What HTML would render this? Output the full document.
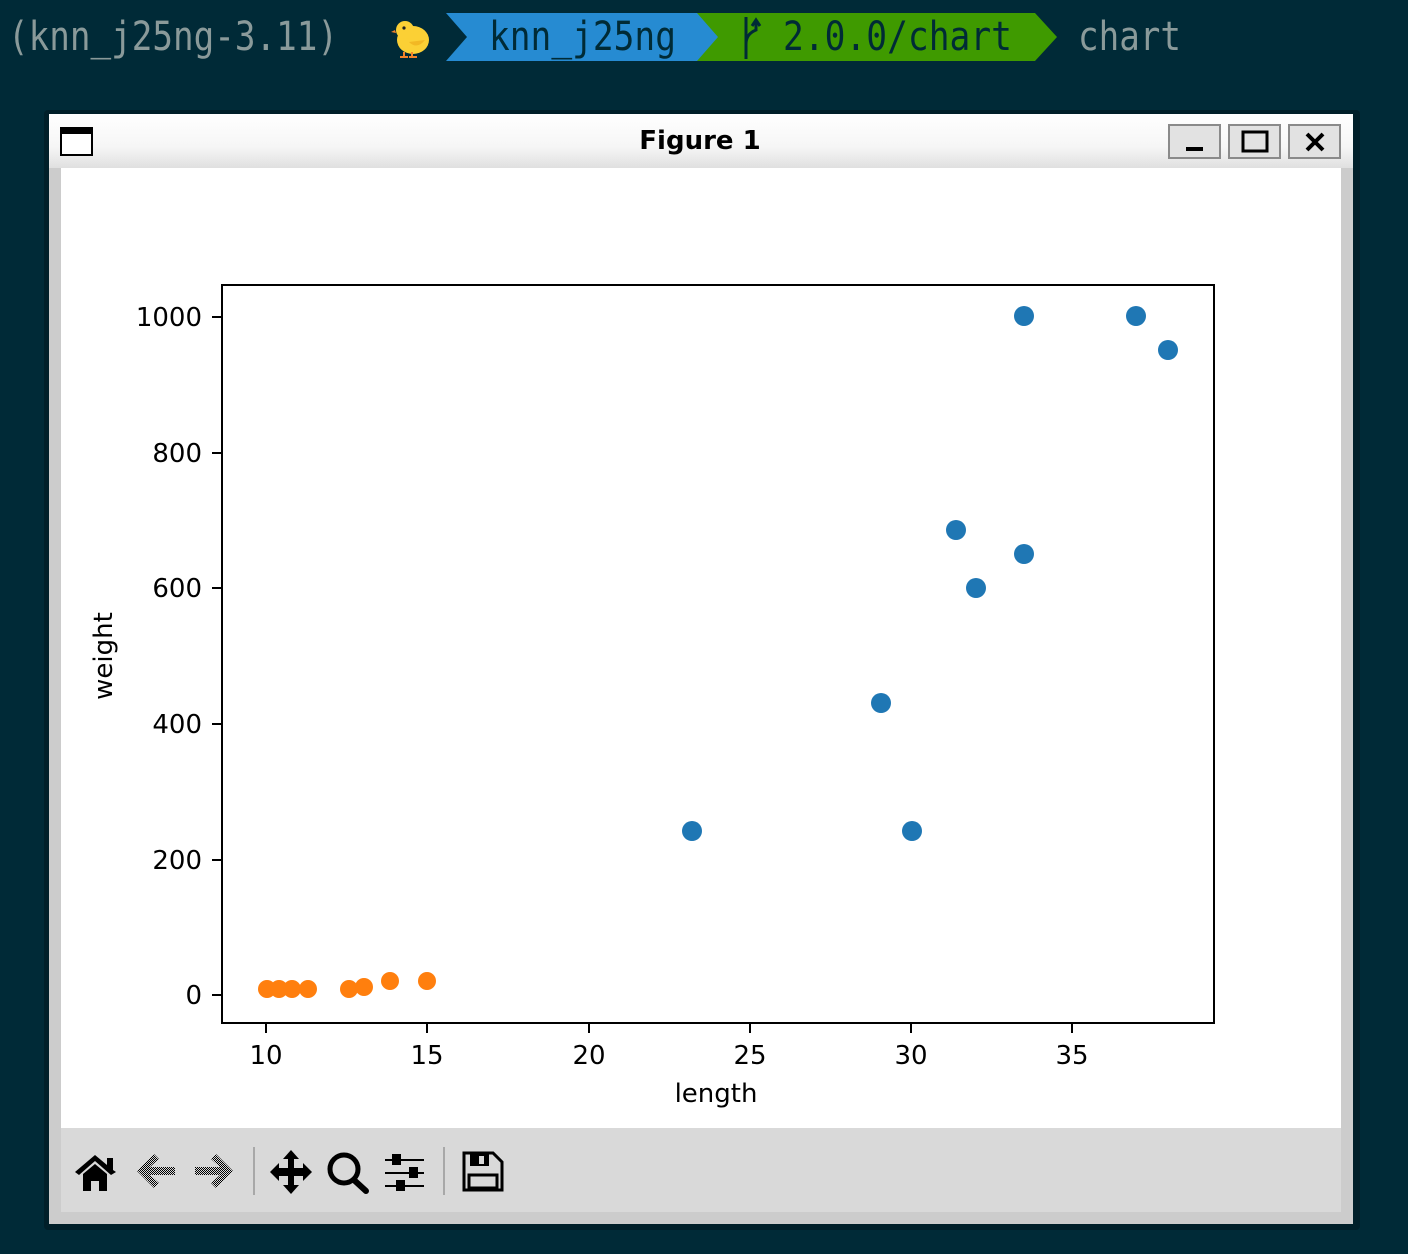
<!DOCTYPE html>
<html><head><meta charset="utf-8"><style>
html,body{margin:0;padding:0;background:#002b36;width:1408px;height:1254px;overflow:hidden}
svg{position:absolute;left:0;top:0}
</style></head><body>
<svg width="1408" height="1254" viewBox="0 0 1408 1254" xmlns="http://www.w3.org/2000/svg">
<defs>
<linearGradient id="tb" x1="0" y1="0" x2="0" y2="1"><stop offset="0" stop-color="#ffffff"/><stop offset="0.6" stop-color="#f6f6f6"/><stop offset="1" stop-color="#e0e0e0"/></linearGradient>
<pattern id="dith" width="2" height="2" patternUnits="userSpaceOnUse"><rect width="1" height="1" fill="#000"/><rect x="1" y="1" width="1" height="1" fill="#000"/></pattern>
</defs>
<rect width="1408" height="1254" fill="#002a37"/>
<!-- prompt -->
<g transform="translate(391,18)">
<ellipse cx="22" cy="22" rx="16" ry="14" fill="#fbd035"/>
<circle cx="14" cy="12" r="9" fill="#fbd035"/>
<circle cx="13" cy="10" r="1.6" fill="#222"/>
<path d="M4 12 L0 14 L5 15Z" fill="#f4822a"/>
<path d="M18 24 Q26 32 34 22" fill="#f2b824"/>
<rect x="12" y="34" width="2" height="5" fill="#f4822a"/><rect x="20" y="34" width="2" height="5" fill="#f4822a"/>
<rect x="9" y="38" width="8" height="2" fill="#f4822a"/><rect x="18" y="38" width="8" height="2" fill="#f4822a"/>
</g>
<path d="M446 13 L700 13 L720 37 L700 61 L446 61 L467 37Z" fill="#268bd2"/>
<path d="M697 13 L1035 13 L1057 37 L1035 61 L697 61 L718 37Z" fill="#3f9a00"/>
<path d="M746 17 L746 59 M746 44 Q746 34 756 30 L756 22 M752 26 L756 20 L760 26" stroke="#002b36" stroke-width="3" fill="none"/>
<g font-family="DejaVu Sans Mono, Liberation Mono, monospace" font-size="40">
<text x="8" y="50" fill="#8a9a9a" textLength="330" lengthAdjust="spacingAndGlyphs">(knn_j25ng-3.11)</text>
<text x="489" y="50" fill="#002b36" textLength="187" lengthAdjust="spacingAndGlyphs">knn_j25ng</text>
<text x="783" y="50" fill="#002b36" textLength="229" lengthAdjust="spacingAndGlyphs">2.0.0/chart</text>
<text x="1078" y="50" fill="#8a9a9a" textLength="103" lengthAdjust="spacingAndGlyphs">chart</text>
</g>
<!-- window -->
<rect x="44" y="110" width="1316" height="1120" fill="#000" opacity="0.25" rx="4"/>
<rect x="49" y="114" width="1304" height="1110" fill="#cccccc"/>
<rect x="49" y="114" width="1304" height="54" fill="url(#tb)"/>
<rect x="61" y="128" width="31" height="27" fill="#fff" stroke="#000" stroke-width="2"/>
<rect x="61" y="128" width="31" height="6" fill="#000"/>
<text x="700" y="149" text-anchor="middle" font-family="DejaVu Sans, sans-serif" font-weight="bold" font-size="26" fill="#000">Figure 1</text>
<g fill="#e2e2e2" stroke="#8a8a8a" stroke-width="2">
<rect x="1169" y="125" width="51" height="33"/><rect x="1229" y="125" width="51" height="33"/><rect x="1289" y="125" width="51" height="33"/>
</g>
<rect x="1186" y="147" width="17" height="4" fill="#000"/>
<rect x="1243" y="132" width="24" height="19" fill="none" stroke="#000" stroke-width="3"/>
<path d="M1307 134 L1323 150 M1323 134 L1307 150" stroke="#000" stroke-width="4"/>
<rect x="61" y="168" width="1280" height="960" fill="#fff"/>
<rect x="61" y="1128" width="1280" height="84" fill="#d9d9d9"/>
<!-- axes -->
<rect x="222" y="285" width="992" height="738" fill="none" stroke="#000" stroke-width="2"/>
<g stroke="#000" stroke-width="2">
<line x1="212" y1="995" x2="222" y2="995"/><line x1="212" y1="860" x2="222" y2="860"/><line x1="212" y1="724" x2="222" y2="724"/><line x1="212" y1="588" x2="222" y2="588"/><line x1="212" y1="453" x2="222" y2="453"/><line x1="212" y1="317" x2="222" y2="317"/>
<line x1="266" y1="1023" x2="266" y2="1033"/><line x1="427" y1="1023" x2="427" y2="1033"/><line x1="589" y1="1023" x2="589" y2="1033"/><line x1="750" y1="1023" x2="750" y2="1033"/><line x1="911" y1="1023" x2="911" y2="1033"/><line x1="1072" y1="1023" x2="1072" y2="1033"/>
</g>
<g font-family="DejaVu Sans, sans-serif" font-size="26" fill="#000">
<g text-anchor="end">
<text x="202" y="1004">0</text><text x="202" y="869">200</text><text x="202" y="733">400</text><text x="202" y="597">600</text><text x="202" y="462">800</text><text x="202" y="326">1000</text>
</g>
<g text-anchor="middle">
<text x="266" y="1064">10</text><text x="427" y="1064">15</text><text x="589" y="1064">20</text><text x="750" y="1064">25</text><text x="911" y="1064">30</text><text x="1072" y="1064">35</text>
<text x="716" y="1102">length</text>
<text transform="translate(112,656) rotate(-90)">weight</text>
</g>
</g>
<g fill="#1f77b4">
<circle cx="692" cy="831" r="10"/><circle cx="881" cy="703" r="10"/><circle cx="912" cy="831" r="10"/><circle cx="956" cy="530" r="10"/><circle cx="976" cy="588" r="10"/><circle cx="1024" cy="554" r="10"/><circle cx="1024" cy="316" r="10"/><circle cx="1136" cy="316" r="10"/><circle cx="1168" cy="350" r="10"/>
</g>
<g fill="#ff7f0e">
<circle cx="267" cy="989" r="9"/><circle cx="279" cy="989" r="9"/><circle cx="292" cy="989" r="9"/><circle cx="308" cy="989" r="9"/><circle cx="349" cy="989" r="9"/><circle cx="364" cy="987" r="9"/><circle cx="390" cy="981" r="9"/><circle cx="427" cy="981" r="9"/>
</g>
<!-- toolbar icons -->
<path d="M75 1172 L95 1155 L107 1165 L107 1158 L113 1158 L113 1170 L116 1172 L111 1175 L95 1161 L79 1175Z M83 1174 L95 1164 L107 1174 L107 1191 L99 1191 L99 1181 L91 1181 L91 1191 L83 1191Z" fill="#000"/>
<path d="M137 1171 L154 1154 L159 1159 L150 1167 L175 1167 L175 1175 L150 1175 L159 1183 L154 1188Z" fill="url(#dith)"/>
<path d="M233 1171 L216 1154 L211 1159 L220 1167 L195 1167 L195 1175 L220 1175 L211 1183 L216 1188Z" fill="url(#dith)"/>
<rect x="253" y="1147" width="2" height="48" fill="#a8a8a8"/>
<rect x="443" y="1147" width="2" height="48" fill="#a8a8a8"/>
<path d="M291 1150 L299 1159 L294 1159 L294 1168 L303 1168 L303 1163 L312 1172 L303 1181 L303 1176 L294 1176 L294 1185 L299 1185 L291 1194 L283 1185 L288 1185 L288 1176 L279 1176 L279 1181 L270 1172 L279 1163 L279 1168 L288 1168 L288 1159 L283 1159Z" fill="#000"/>
<circle cx="344" cy="1169" r="14" fill="none" stroke="#000" stroke-width="5"/>
<path d="M354 1180 L366 1191" stroke="#000" stroke-width="6" stroke-linecap="round"/>
<g stroke="#000" stroke-width="2"><line x1="385" y1="1160" x2="424" y2="1160"/><line x1="385" y1="1173" x2="424" y2="1173"/><line x1="385" y1="1186" x2="424" y2="1186"/></g>
<g fill="#000"><rect x="392" y="1154" width="9" height="11"/><rect x="409" y="1167" width="9" height="11"/><rect x="396" y="1180" width="9" height="11"/></g>
<path d="M464 1153 L493 1153 L502 1162 L502 1190 L464 1190Z" fill="none" stroke="#000" stroke-width="3"/>
<rect x="470" y="1154" width="19" height="12" fill="#000"/><rect x="479" y="1156" width="5" height="8" fill="#d9d9d9"/>
<rect x="469" y="1175" width="28" height="13" fill="none" stroke="#000" stroke-width="3"/>
</svg>
</body></html>
